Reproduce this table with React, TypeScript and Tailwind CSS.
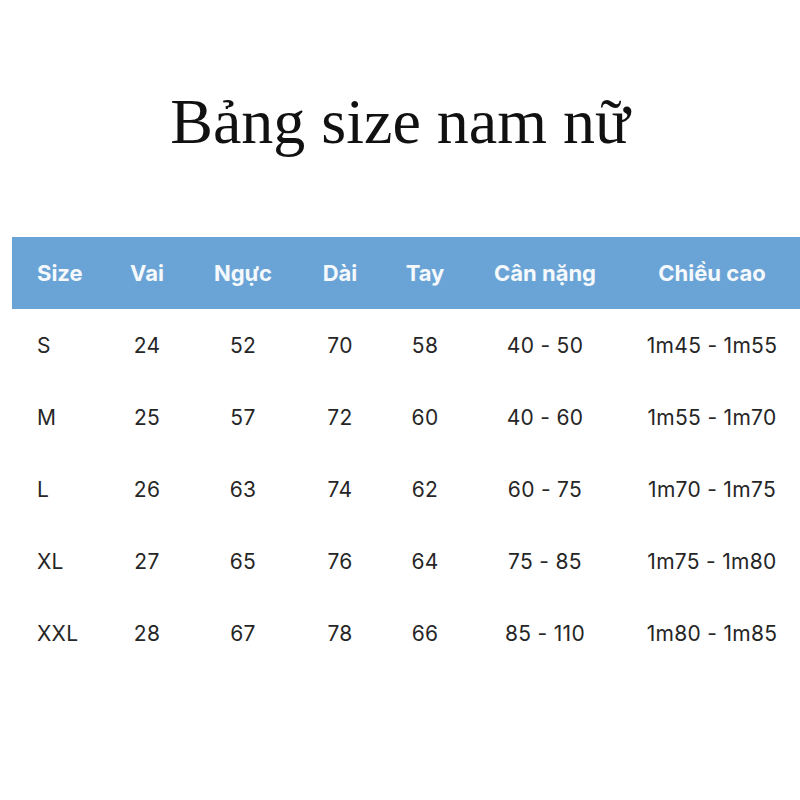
import React from 'react';

const columns = [
  { label: 'Size', width: 'w-[87px]' },
  { label: 'Vai', width: 'w-[96px]' },
  { label: 'Ngực', width: 'w-[96px]' },
  { label: 'Dài', width: 'w-[98px]' },
  { label: 'Tay', width: 'w-[72px]' },
  { label: 'Cân nặng', width: 'w-[168px]' },
  { label: 'Chiều cao', width: 'w-[166px]' },
];

const rows = [
  ['S', '24', '52', '70', '58', '40 - 50', '1m45 - 1m55'],
  ['M', '25', '57', '72', '60', '40 - 60', '1m55 - 1m70'],
  ['L', '26', '63', '74', '62', '60 - 75', '1m70 - 1m75'],
  ['XL', '27', '65', '76', '64', '75 - 85', '1m75 - 1m80'],
  ['XXL', '28', '67', '78', '66', '85 - 110', '1m80 - 1m85'],
];

const cellClass = (i: number) =>
  i === 0 ? 'pl-[25px] text-left whitespace-nowrap' : 'text-center whitespace-nowrap';

const App: React.FC = () => {
  return (
    <div className="w-[800px] h-[800px] bg-white overflow-hidden">
      <h1 className="pt-[84px] h-[237px] text-center text-[64px] leading-[76px] text-[#111] font-['Liberation_Serif',serif]">
        Bảng size nam nữ
      </h1>

      <div className="ml-[12px]">
        {/* header */}
        <div className="flex items-center h-[72px] bg-[#6aa4d6] text-[#f5f9fc] font-bold text-[22px] font-['Inter',sans-serif]">
          {columns.map((c, i) => (
            <div key={c.label} className={`${c.width} ${cellClass(i)}`}>
              {c.label}
            </div>
          ))}
        </div>

        {/* body */}
        <div className="mt-px">
          {rows.map((r) => (
            <div
              key={r[0]}
              className="flex items-center h-[72px] text-[21px] tracking-[0.3px] text-[#262626] font-['Inter',sans-serif]"
            >
              {r.map((v, i) => (
                <div key={i} className={`${columns[i].width} ${cellClass(i)}`}>
                  {v}
                </div>
              ))}
            </div>
          ))}
        </div>
      </div>
    </div>
  );
};

export default App;
